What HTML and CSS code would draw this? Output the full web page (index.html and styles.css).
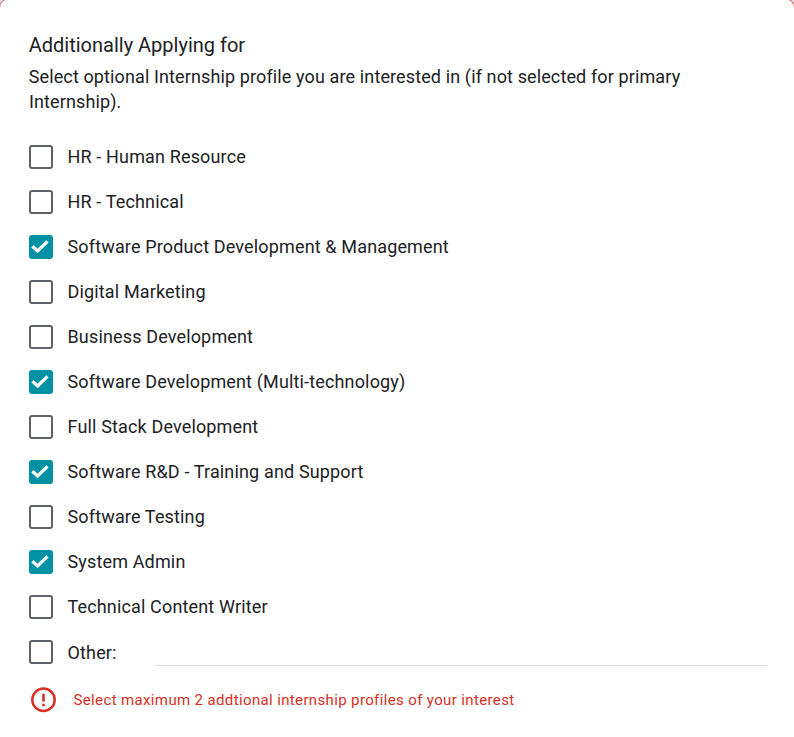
FILE: index.html
```html
<!DOCTYPE html>
<html lang="en">
<head>
<meta charset="utf-8">
<title>Additionally Applying for</title>
<link rel="stylesheet" href="styles.css">
</head>
<body>
<svg class="defs" width="0" height="0"><symbol id="tick" viewBox="0 0 24 24"><path d="M3.4 11.2 8.6 16 18.5 6.4" fill="none" stroke="#fff" stroke-width="3.3"/></symbol></svg>
<main class="card">
<h1 class="title">Additionally Applying for</h1>
<p class="desc">Select optional Internship profile you are interested in (if not selected for primary Internship).</p>
<ul class="options">
<li class="option"><span class="box"></span><span class="label">HR - Human Resource</span></li>
<li class="option"><span class="box"></span><span class="label">HR - Technical</span></li>
<li class="option"><span class="box checked"><svg><use href="#tick"/></svg></span><span class="label">Software Product Development &amp; Management</span></li>
<li class="option"><span class="box"></span><span class="label">Digital Marketing</span></li>
<li class="option"><span class="box"></span><span class="label">Business Development</span></li>
<li class="option"><span class="box checked"><svg><use href="#tick"/></svg></span><span class="label">Software Development (Multi-technology)</span></li>
<li class="option"><span class="box"></span><span class="label">Full Stack Development</span></li>
<li class="option"><span class="box checked"><svg><use href="#tick"/></svg></span><span class="label">Software R&amp;D - Training and Support</span></li>
<li class="option"><span class="box"></span><span class="label">Software Testing</span></li>
<li class="option"><span class="box checked"><svg><use href="#tick"/></svg></span><span class="label">System Admin</span></li>
<li class="option"><span class="box"></span><span class="label">Technical Content Writer</span></li>
<li class="option other"><span class="box"></span><span class="label">Other:</span><span class="line"></span></li>
</ul>
<div class="error"><svg class="alert" viewBox="0 0 26 26"><circle cx="12.5" cy="12.8" r="11.2" fill="none" stroke="#d93025" stroke-width="2.5"/><path d="M12.5 6.8v7.7M12.5 16.8v2.5" stroke="#d93025" stroke-width="2.6"/></svg><span>Select maximum 2 addtional internship profiles of your interest</span></div>
</main>
</body>
</html>
```
FILE: styles.css
```css
html { background: #d9e3e8; }
body { margin: 0; overflow: hidden; font-family: Roboto, sans-serif; color: #202124; }
.defs { position: absolute; }
.card { box-sizing: border-box; height: 740px; margin: -2px -1px 0 -1px; padding: 31px 27px 0 29px; background: #fff; border: 1px solid #d9534f; border-radius: 10px 10px 0 0; }
.title { margin: 0; font-size: 20px; line-height: 30px; font-weight: 400; text-indent: -0.3px; }
.desc { margin: 4px 0 0; width: 700px; font-size: 18px; line-height: 25px; letter-spacing: 0.12px; text-indent: -0.3px; }
.options { list-style: none; margin: 20px 0 0; padding: 0; }
.option { display: flex; align-items: center; height: 45px; }
.box { box-sizing: border-box; flex: none; width: 24px; height: 24px; border: 2px solid #5f6368; border-radius: 3px; }
.box.checked { border: 0; background: #0091a4; }
.box svg { display: block; width: 24px; height: 24px; }
.label { margin-left: 14.5px; font-size: 18px; line-height: 25px; letter-spacing: 0.15px; }
.other .label { padding-top: 2px; }
.line { align-self: flex-end; flex: 1; height: 1px; margin: 0 0 8px 39.3px; background: #dadce0; }
.error { display: flex; align-items: center; margin-top: 13px; padding-left: 1.5px; font-size: 15px; line-height: 20px; letter-spacing: 0.365px; color: #d93025; }
.alert { width: 26px; height: 26px; margin-right: 17px; }
```
